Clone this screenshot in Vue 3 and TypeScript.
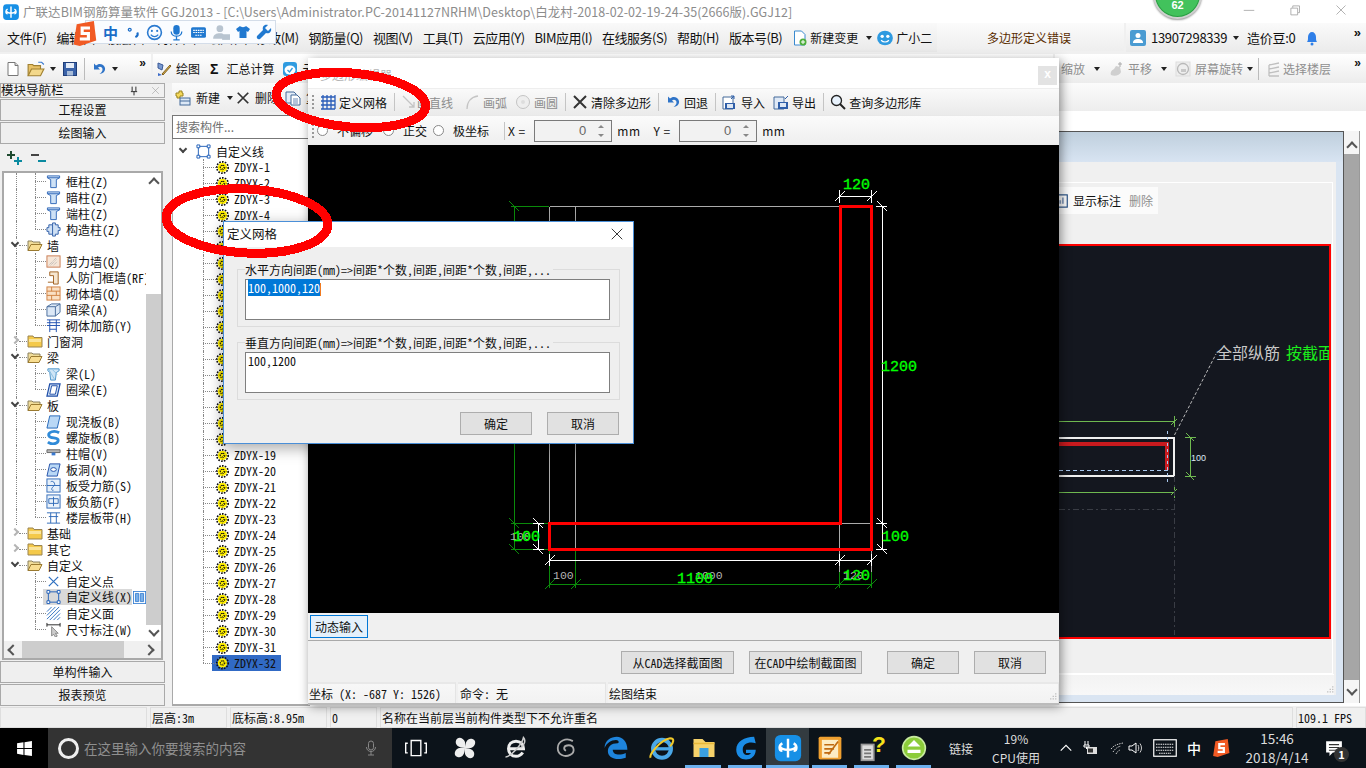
<template>
  <div class="desktop">
    <!-- main window -->
    <header class="titlebar">
      <Ico n="glodon" :s="18" class="app-icon" />
      <span class="title-text">广联达BIM钢筋算量软件 GGJ2013 - [C:\Users\Administrator.PC-20141127NRHM\Desktop\白龙村-2018-02-02-19-24-35(2666版).GGJ12]</span>
      <div class="win-ctrls">
        <Ico n="winMin" :s="12" />
        <Ico n="winMax" :s="12" />
        <Ico n="winClose" :s="12" />
      </div>
    </header>

    <nav class="menubar">
      <div class="menu-left">
        <span v-for="m in menus" :key="m" class="menu-item" :class="{ shifted: m === '修改(M)' }">{{ m }}</span>
        <span class="menu-item with-icon change"><Ico n="change" :s="16" />新建变更<i class="caret"></i></span>
        <span class="menu-item with-icon xiao"><Ico n="xiao" :s="18" />广小二</span>
      </div>
      <div class="menu-notice">多边形定义错误</div>
      <div class="menu-user">
        <Ico n="user" :s="16" />
        <span class="phone">13907298339</span><i class="caret"></i>
        <span class="beans">造价豆:0</span>
        <Ico n="bell" :s="16" class="bell" />
        <span class="more">»</span>
      </div>
    </nav>

    <div class="toolbar">
      <div class="tb-group first">
        <Ico n="doc" :s="16" /><Ico n="open" :s="18" /><i class="caret"></i><Ico n="save" :s="16" />
        <i class="tb-sep"></i>
        <Ico n="undo" :s="16" /><i class="caret"></i>
        <span class="more small">»</span>
      </div>
      <div class="tb-group second">
        <span class="tool"><Ico n="draw" :s="16" />绘图</span>
        <span class="tool"><b class="sigma">Σ</b>汇总计算</span>
        <span class="tool"><Ico n="cloud" :s="16" />云检查</span>
      </div>
      <div class="tb-group view-tools">
        <span class="tool off">缩放<i class="caret"></i></span>
        <span class="tool off"><Ico n="pan" :s="16" />平移<i class="caret"></i></span>
        <span class="tool off"><Ico n="rotate" :s="16" />屏幕旋转<i class="caret tight"></i></span>
        <i class="tb-sep"></i>
        <span class="tool off floors"><Ico n="floors" :s="16" />选择楼层</span>
        <span class="more small">»</span>
      </div>
    </div>

    <main class="workspace">
      <!-- module navigator -->
      <aside class="nav-panel">
        <div class="nav-head">
          <span>模块导航栏</span>
          <span class="nav-head-btns"><Ico n="pin" :s="10" /><Ico n="winClose" :s="9" /></span>
        </div>
        <button class="nav-btn">工程设置</button>
        <button class="nav-btn">绘图输入</button>
        <div class="nav-expand"><Ico n="plusplus" :s="16" /><Ico n="minusminus" :s="16" /></div>
        <div class="nav-tree-box">
          <div class="nav-tree-wrap">
            <div class="nav-tree">
              <div
                v-for="r in navRows"
                :key="r.t + r.k"
                class="nav-row"
                :class="[r.l ? 'lv1' : 'lv0', { trunk: r.trunk, branch: r.l && !r.end, branchend: r.end, sel: r.sel }]"
              >
                <template v-if="r.l">
                  <i class="hook"></i>
                  <Ico :n="r.i" :s="15" class="row-icon" />
                </template>
                <template v-else>
                  <i class="chev" :class="{ open: r.i === 'folderOpen' }"></i>
                  <i class="hook0"></i>
                  <Ico :n="r.i" :s="16" class="row-icon" />
                </template>
                <span class="row-label">{{ r.t }}{{ r.k }}</span>
                <Ico v-if="r.sel" n="bars" :s="13" class="row-tail" />
              </div>
            </div>
            <div class="vscroll">
              <i class="arrow up"></i>
              <div class="vspace"></div>
              <div class="vthumb"></div>
              <i class="arrow down"></i>
            </div>
          </div>
          <div class="hscroll">
            <i class="arrow left"></i>
            <div class="hthumb"></div>
            <i class="arrow right"></i>
          </div>
        </div>
        <button class="nav-btn">单构件输入</button>
        <button class="nav-btn">报表预览</button>
      </aside>

      <!-- component list -->
      <section class="comp-panel">
        <div class="comp-tools">
          <span class="tool"><Ico n="newcomp" :s="16" />新建<i class="caret"></i></span>
          <span class="tool"><Ico n="cross" :s="14" />删除</span>
          <span class="tool copy"><Ico n="copy" :s="16" />复制</span>
        </div>
        <div class="comp-search">搜索构件...</div>
        <div class="comp-tree">
          <div class="comp-root">
            <i class="chev open"></i>
            <Ico n="lineSq" :s="15" />
            <span>自定义线</span>
          </div>
          <div v-for="n in 32" :key="n" class="comp-row" :class="{ last: n === 32 }">
            <i class="hook"></i>
            <Ico n="gear" :s="13" />
            <span class="zdyx">ZDYX-{{ n }}</span>
          </div>
        </div>
      </section>

      <!-- window behind the editor -->
      <section class="back-area">
        <div class="back-strip"></div>
        <div class="back-body">
          <div class="back-frame">
            <div class="back-caption"></div>
            <div class="back-inner">
              <div class="back-outline">
                <div class="back-tools">
                  <span class="tool"><Ico n="showdim" :s="14" />显示标注</span>
                  <span class="tool off">删除</span>
                </div>
                <div class="back-canvas">
                  <svg class="back-svg" viewBox="310 247 1019 390" shape-rendering="crispEdges">
                    <path d="M1059 422.5H1175M1059 493.5H1175" stroke="#6fb950" fill="none" />
                    <path d="M1174 417v11M1171 426l6-6M1174 488v11M1171 496l6-6M1190.5 438v39M1185 438h11M1185 477h11M1186 434l8 8M1186 473l8 8" stroke="#6fb950" fill="none" />
                    <path d="M1059 438.5H1174V476.5H1059" stroke="#f0f0f0" stroke-width="2" fill="none" />
                    <path d="M1059 445H1167V471" stroke="#c81a1e" stroke-width="4" fill="none" />
                    <path d="M1059 471.5H1170" stroke="#a9c8ee" stroke-dasharray="4 3" fill="none" />
                    <path d="M1167 432V484" stroke="#a9c8ee" stroke-dasharray="3 3" fill="none" />
                    <path d="M1174.5 436L1216 355" stroke="#bbb" stroke-dasharray="3 2" fill="none" shape-rendering="auto" />
                    <path d="M1059 510H1174M1174.5 477V636" stroke="#3a3d45" stroke-dasharray="6 3 2 3" fill="none" />
                    <text x="1191" y="462" class="t-note">100</text>
                    <text x="1216" y="360" class="t-gray">全部纵筋</text>
                    <text x="1286" y="360" class="t-green">按截面</text>
                  </svg>
                </div>
              </div>
              <div class="back-status"><Ico n="grip" :s="10" class="grip" /></div>
            </div>
          </div>
          <div class="back-scroll">
            <i class="arrow up"></i>
            <div class="back-thumb"></div>
            <i class="arrow down"></i>
          </div>
        </div>
      </section>
    </main>

    <footer class="statusbar">
      <span class="cell c1"></span>
      <span class="cell c2">层高:3m</span>
      <span class="cell c3">底标高:8.95m</span>
      <span class="cell c4">0</span>
      <span class="cell c5">名称在当前层当前构件类型下不允许重名</span>
      <span class="cell c6">109.1 FPS</span>
    </footer>

    <div class="taskbar">
      <div class="start"><Ico n="windows" :s="17" /></div>
      <div class="search">
        <i class="cortana"></i>
        <span class="search-text">在这里输入你要搜索的内容</span>
        <Ico n="mic" :s="16" class="search-mic" />
      </div>
      <div
        v-for="a in taskApps"
        :key="a.n"
        class="task-slot"
        :class="{ running: a.on, current: a.cur }"
        :style="{ width: a.w + 'px' }"
      >
        <Ico :n="a.n" :s="a.s" />
      </div>
      <span class="task-link">链接</span>
      <div class="cpu"><span>19%</span><span>CPU使用</span></div>
      <div class="tray">
        <Ico n="trayUp" :s="14" />
        <Ico n="trayPower" :s="16" />
        <Ico n="trayWifi" :s="16" class="wifi" />
        <Ico n="traySound" :s="16" class="sound" />
        <Ico n="trayKbd" :s="24" />
        <span class="tray-ime">中</span>
        <Ico n="sogou" :s="18" class="tray-sogou" />
      </div>
      <div class="clock"><span>15:46</span><span>2018/4/14</span></div>
      <div class="notify">
        <Ico n="note" :s="18" />
        <span class="notify-num">1</span>
      </div>
    </div>

    <!-- polygon editor window -->
    <div class="editor">
      <div class="ed-title">
        <span class="ed-title-text">多边形编辑器</span>
        <span class="ed-close">x</span>
      </div>
      <div class="ed-toolbar row1">
        <i class="grip-v"></i>
        <template v-for="(it, i) in edTools" :key="i">
          <i v-if="it.sep" class="ed-sep"></i>
          <span v-else class="ed-tool" :class="{ off: it.off, tightgap: it.i === 'lineOff' }"><Ico :n="it.i!" :s="16" />{{ it.t }}</span>
        </template>
      </div>
      <div class="ed-toolbar row2">
        <i class="grip-v"></i>
        <label class="radio first"><i></i>不偏移</label>
        <label class="radio"><i></i>正交</label>
        <label class="radio"><i></i>极坐标</label>
        <i class="ed-sep"></i>
        <span class="coord-label">X =</span>
        <span class="spin"><span class="spin-val">0</span><span class="spin-btns"><i class="tri-up"></i><i class="tri-down"></i></span></span>
        <span class="unit">mm</span>
        <span class="coord-label y">Y =</span>
        <span class="spin"><span class="spin-val">0</span><span class="spin-btns"><i class="tri-up"></i><i class="tri-down"></i></span></span>
        <span class="unit">mm</span>
      </div>
      <div class="cad-area">
        <svg class="cad" viewBox="308 145 751 468" shape-rendering="crispEdges">
          <path :d="gridPath" stroke="#aaaaaa" fill="none" />
          <path :d="greenPath" stroke="#0a8a0a" fill="none" />
          <path :d="whitePath" stroke="#ffffff" fill="none" />
          <path d="M840 206.5H871.5V549.5H549.5V523.5H840Z" stroke="#ff0000" stroke-width="3" fill="none" />
          <text x="843" y="189" class="c-green">120</text>
          <text x="881" y="371" class="c-green">1200</text>
          <text x="882" y="541" class="c-green">100</text>
          <text x="510" y="540" class="c-gray">100</text>
          <text x="513" y="541" class="c-green">100</text>
          <text x="553" y="579" class="c-gray">100</text>
          <text x="695" y="579" class="c-gray">1000</text>
          <text x="843" y="579" class="c-gray">120</text>
          <text x="677" y="583" class="c-green">1100</text>
          <text x="843" y="580" class="c-green">120</text>
        </svg>
      </div>
      <div class="ed-dyn"><button class="dyn-btn">动态输入</button></div>
      <div class="ed-actions">
        <button class="win-btn a1">从CAD选择截面图</button>
        <button class="win-btn a2">在CAD中绘制截面图</button>
        <button class="win-btn a3">确定</button>
        <button class="win-btn a4">取消</button>
      </div>
      <div class="ed-status">
        <span class="ed-cell e1">坐标 (X: -687 Y: 1526)</span>
        <span class="ed-cell e2">命令: 无</span>
        <span class="ed-cell e3">绘图结束<Ico n="grip" :s="10" class="grip" /></span>
      </div>
    </div>

    <!-- define grid dialog -->
    <div class="dialog">
      <div class="dlg-title">
        <span>定义网格</span>
        <Ico n="dlgClose" :s="12" />
      </div>
      <div class="dlg-body">
        <fieldset class="dlg-group">
          <legend>水平方向间距(mm)=&gt;间距*个数,间距,间距*个数,间距,...</legend>
          <div class="dlg-input"><span class="picked">100,1000,120</span><i class="text-caret"></i></div>
        </fieldset>
        <fieldset class="dlg-group">
          <legend>垂直方向间距(mm)=&gt;间距*个数,间距,间距*个数,间距,...</legend>
          <div class="dlg-input">100,1200</div>
        </fieldset>
        <div class="dlg-btns">
          <button class="win-btn">确定</button>
          <button class="win-btn">取消</button>
        </div>
      </div>
    </div>

    <!-- hand drawn marks on the screenshot -->
    <svg class="marks" viewBox="0 0 1366 768" shape-rendering="crispEdges">
      <ellipse cx="351" cy="100" rx="75" ry="27" transform="rotate(5 351 100)" />
      <ellipse cx="247" cy="221" rx="81" ry="32" transform="rotate(3 247 221)" />
    </svg>

    <!-- sogou input bar -->
    <div class="ime">
      <Ico n="sogou" :s="25" class="ime-logo" />
      <b class="ime-zh">中</b>
      <Ico n="imePunct" :s="15" />
      <Ico n="imeSmile" :s="17" />
      <Ico n="imeMic" :s="17" />
      <Ico n="imeKbd" :s="17" />
      <Ico n="imeUser" :s="18" />
      <Ico n="imeShirt" :s="16" />
      <Ico n="imeWrench" :s="16" />
    </div>

    <div class="score-badge"><span>62</span></div>
  </div>
</template>

<script setup lang="ts">
import { h } from 'vue'

// icons are 16x16 unless the path says otherwise
const icons: Record<string, string> = {
  glodon: '<rect x="1" y="1" width="14" height="14" rx="3" fill="#1790e6"/><path d="M8 3v10M4 7.5c1 2 7 2 8 0M5 5.5c-2 1-2 4 0 4M11 5.5c2 1 2 4 0 4" stroke="#fff" stroke-width="1.3" fill="none"/>',
  winMin: '<path d="M1 8.5h14" stroke="#999"/>',
  winMax: '<path d="M2.5 5.5h9v9h-9zM5 5V2.5h9v9h-2" stroke="#999" fill="none"/>',
  winClose: '<path d="M2 2l12 12M14 2L2 14" stroke="#999" fill="none"/>',
  dlgClose: '<path d="M1 1l14 14M15 1L1 15" stroke="#222" stroke-width="1.2" fill="none"/>',
  change: '<path d="M2.5 1h7l3.5 3.5V15H2.5z" fill="#fff" stroke="#3a8ad0"/><circle cx="11" cy="12" r="3.5" fill="#4fae3c"/><path d="M9 12h4M11 10v4" stroke="#fff"/>',
  xiao: '<ellipse cx="8" cy="8" rx="7" ry="6.5" fill="#2e9ae0"/><circle cx="5.5" cy="6.5" r="1.5" fill="#fff"/><circle cx="10.5" cy="6.5" r="1.5" fill="#fff"/><path d="M4.5 10c2 2 5 2 7 0" stroke="#fff" fill="none"/>',
  user: '<rect width="16" height="16" rx="2" fill="#4a9bd2"/><circle cx="8" cy="5.5" r="2.5" fill="#fff"/><path d="M3 13c0-3 2-4 5-4s5 1 5 4z" fill="#fff"/>',
  bell: '<path d="M3 12c1-1 1-3 1-5 0-3 2-5 4-5s4 2 4 5c0 2 0 4 1 5z" fill="#2f7fe8"/><circle cx="8" cy="14" r="1.5" fill="#2f7fe8"/>',
  doc: '<path d="M3 1.5h7l3 3v10H3z" fill="#fff" stroke="#777"/><path d="M10 1.5v3h3" fill="#ddd" stroke="#777"/>',
  open: '<path d="M1 14V4h4l1 1h6v3" fill="#e8c268" stroke="#a08030"/><path d="M1 14l3-6h11l-3 6z" fill="#f3d88a" stroke="#a08030"/><path d="M10 2l3 0 2 2" stroke="#3a7ad0" fill="none"/>',
  save: '<rect x="1.5" y="1.5" width="13" height="13" fill="#3a62a8" stroke="#1f3d78"/><rect x="4" y="2" width="8" height="5" fill="#e4ebf6"/><rect x="5" y="10" width="6" height="4.5" fill="#a8bcd8"/>',
  undo: '<path d="M3 2.5v6h6l-2-2c2-1.5 4.5-.5 4.5 2 0 1.5-1 3-3 4.5 4-.5 6-3 5.5-6C13 3 8 1.5 5 4.5z" fill="#2f74c8"/>',
  draw: '<path d="M2 2l5 2-1 5-4-2z" fill="#7a9ad0" stroke="#3a5a98"/><path d="M6 13l8-9 1 1-8 9z" fill="#d8b04a" stroke="#806020"/><path d="M2 12l4 2-4 1z" fill="#3a6ac8"/>',
  cloud: '<rect x="1" y="1" width="14" height="14" rx="3" fill="#2f9be0"/><ellipse cx="8" cy="9" rx="5.5" ry="4.5" fill="#fff"/><path d="M5.5 9l2 2 3-4" stroke="#2f9be0" stroke-width="1.3" fill="none"/>',
  pan: '<path d="M3 14c-1-3 1-5 3-6l2-3 4 1 1 5c-1 3-6 5-10 3z" fill="#cfcfcf"/><path d="M12 1v5M10 3h4" stroke="#aaa"/>',
  rotate: '<rect x="1" y="1" width="14" height="14" fill="#eee" stroke="#ddd"/><circle cx="8" cy="8" r="5.5" stroke="#b8b8b8" stroke-width="1.3" fill="none"/><path d="M6 8h5v3H6z" fill="#c8c8c8"/>',
  floors: '<path d="M4 4l10-2M4 8l10-2M4 12l10-2M4 15h10M4 4v11" stroke="#c0c0c0" stroke-width="1.3" fill="none"/>',
  pin: '<path d="M5 1v7M11 1v7M3 9h10M8 9v6" stroke="#222" stroke-width="1.5" fill="none"/>',
  plusplus: '<path d="M4 1v8M0 5h8" stroke="#1f4a30" stroke-width="2"/><path d="M11 7v8M7 11h8" stroke="#0a8aa0" stroke-width="2"/>',
  minusminus: '<path d="M0 5h8" stroke="#444" stroke-width="2"/><path d="M7 11h8" stroke="#0a8aa0" stroke-width="2"/>',
  folderOpen: '<path d="M1 13.5V4h4l1 1h7v2.5" fill="#f0dc98" stroke="#8a8060"/><path d="M1 13.5l3-6h11l-3 6z" fill="#f8dd90" stroke="#9a7a30"/>',
  folder: '<path d="M1 14V3h5l1 1.5h8V14z" fill="#f4c94a" stroke="#9a8450"/><path d="M2 6h12v3H2z" fill="#fae49a"/>',
  col: '<path d="M1.5 2h13v2L11 6v8.5H5V6L1.5 4z" fill="#cfe2f6" stroke="#2f66b8"/><path d="M1.5 4h13" stroke="#2f66b8"/>',
  gearCol: '<path d="M3 3h4V1h3v2h3v3h2v3h-2v4h-3v2H7v-2H3v-3H1V6h2z" fill="#cfe0f4" stroke="#2f5ea8"/><path d="M7 3v10" stroke="#2f5ea8"/>',
  wall: '<rect x="1" y="2" width="14" height="12" fill="#f6e6d8" stroke="#c87a50"/><path d="M3 12l8-8M5 12l6-6M8 12l4-4" stroke="#aaa" stroke-dasharray="1 1"/>',
  door: '<path d="M4 2h9v13H8V6H4z" fill="#f6e6d0" stroke="#a06020"/><path d="M2 13h6" stroke="#a06020"/>',
  brick: '<rect x="1" y="1" width="14" height="14" fill="#fae0c4" stroke="#d08040"/><path d="M1 5.5h14M1 10h14M6 1v4.5M11 5.5V10M6 10v5" stroke="#d08040"/>',
  beam: '<path d="M1 5l5-3h9v9l-5 4H1z" fill="#dce8f6" stroke="#456a9a"/><path d="M1 5h9v10M10 5l5-3" stroke="#456a9a" fill="none"/>',
  wallbar: '<path d="M1 2h14M1 5h14M4 2v13M11 2v13M1 8h14M4 12h7" stroke="#1f50b0" fill="none"/>',
  beamL: '<path d="M2 3h12v2l-3 2-1 8H5L4 7 2 5z" fill="#cfe5f6" stroke="#4a92c8"/><path d="M3 4l6 10M7 4l5 5" stroke="#88bde0"/>',
  ring: '<path d="M4 2h11l-3 13H1z" fill="#d4e4f6" stroke="#1f4ea8" stroke-width="1.3"/><path d="M6 4h6l-2 9H4z" fill="#fff" stroke="#1f4ea8"/>',
  slab: '<path d="M4 2h11l-3 13H1z" fill="#b9d8f6" stroke="#1f64b8"/>',
  spiral: '<path d="M14 3c-5-3-12-1-11 3s10 1 10 5-7 5-11 2" stroke="#2f8ad8" stroke-width="3" fill="none"/>',
  cap: '<path d="M1 4h14v3H1z" fill="#b8b8b8" stroke="#666"/><path d="M6 7h4v3H6z" fill="#3a7ad0"/>',
  hole: '<path d="M4 2h11l-3 13H1z" fill="#b9d8f6" stroke="#1f4ea8"/><ellipse cx="8" cy="8" rx="3" ry="2" fill="#fff" stroke="#1f4ea8"/>',
  slabbar: '<rect x="1" y="1" width="14" height="14" fill="#e6f0fa" stroke="#2f6ab8"/><path d="M1 8h14M5 4c3-2 6 3 3 5s-2 5 0 4" stroke="#2f6ab8" fill="none"/>',
  negbar: '<rect x="1" y="1" width="14" height="14" fill="#eaf2fa" stroke="#2f6ab8"/><path d="M3 5h10v5H3zM8 3v10" stroke="#2f6ab8" fill="none"/>',
  band: '<path d="M1 3h14M1 14h14M5 3v11M11 3v11M3 7h10" stroke="#2f6ab8" fill="none"/>',
  point: '<path d="M3 3l10 10M13 3L3 13" stroke="#2f70c0" stroke-width="1.3"/>',
  lineSq: '<path d="M2.5 2.5h11v11h-11z" fill="none" stroke="#1f5eb8"/><path d="M1 1h3v3H1zM12 1h3v3h-3zM1 12h3v3H1zM12 12h3v3h-3z" fill="#fff" stroke="#1f5eb8"/>',
  hatch: '<path d="M1 6l5-5M1 10l9-9M1 14L14 1M4 15L15 4M8 15l7-7M12 15l3-3" stroke="#2f70c0"/>',
  dimmark: '<path d="M1 1v4M15 1v4M1 3h14" stroke="#222"/><path d="M6 5l7 7-3 0 2 3-2 1-2-3-2 2z" fill="#ccc" stroke="#888"/>',
  bars: '<rect x=".5" y=".5" width="15" height="15" fill="#fff" stroke="#2f7ad0"/><path d="M3 3h4v10H3zM9 3h4v10H9z" fill="#7ab0e8" stroke="#2f7ad0"/>',
  newcomp: '<path d="M1 3h3V1h3v2h1v3H5v2H2V6H1z" fill="#f4d85a" stroke="#9a8420"/><rect x="5" y="8" width="10" height="7" fill="#dce8f6" stroke="#456a9a"/><path d="M5 11h10" stroke="#456a9a"/>',
  cross: '<path d="M2 2l12 12M14 2L2 14" stroke="#333" stroke-width="2"/>',
  copy: '<path d="M1 2h8l2 2v9H1z" fill="#e4edf8" stroke="#456a9a"/><path d="M6 5h6l3 3v7H6z" fill="#fff" stroke="#456a9a"/><path d="M8 9h5M8 11h5M8 13h5" stroke="#6a8ab8"/>',
  gear: '<circle cx="8" cy="8" r="7" fill="none" stroke="#111" stroke-width="2" stroke-dasharray="2 1.5"/><circle cx="8" cy="8" r="5.8" fill="#ffef00"/><circle cx="8" cy="8" r="2.8" fill="none" stroke="#111" stroke-width="1.3" stroke-dasharray="1.5 1"/><path d="M8 1v14M1 8h14" stroke="#111" stroke-dasharray="1 3"/>',
  showdim: '<rect x="1" y="1" width="13" height="14" fill="#fff" stroke="#1f4a80" stroke-width="1.3"/><path d="M6 11V7M9 11V4" stroke="#8aa0c0" stroke-width="2"/>',
  grip: '<path d="M13 2h2v2h-2zM9 6h2v2H9zM13 6h2v2h-2zM5 10h2v2H5zM9 10h2v2H9zM13 10h2v2h-2z" fill="#bbb"/>',
  grid: '<path d="M3 1v14M7 1v14M11 1v14M15 1v14M1 3h14M1 7h14M1 11h14M1 15h14" stroke="#2a5cb8" stroke-width="1.3"/>',
  lineOff: '<path d="M2 2l11 11M13 8v5H8" stroke="#c4c4c4" stroke-width="1.3" fill="none"/>',
  arcOff: '<path d="M3 15C3 8 7 3 14 2" stroke="#c4c4c4" stroke-width="1.3" fill="none"/>',
  circleOff: '<circle cx="8" cy="8" r="6.5" fill="#eee" stroke="#c4c4c4"/><circle cx="8" cy="8" r="2" fill="#ddd"/>',
  importIc: '<path d="M1 3h10v12H1z" fill="#fff" stroke="#456a9a"/><rect x="3" y="9" width="10" height="6" fill="#2f5ea8"/><rect x="5" y="10" width="6" height="4" fill="#dde7f4"/><path d="M9 5l3-3M12 2v3M12 2H9" stroke="#2f5ea8"/>',
  exportIc: '<path d="M1 3h10v12H1z" fill="#dfe9f6" stroke="#456a9a"/><rect x="5" y="8" width="10" height="7" fill="#2f5ea8"/><rect x="7" y="9" width="6" height="4" fill="#dde7f4"/><path d="M12 5l3-3" stroke="#2f5ea8"/>',
  lens: '<circle cx="6.5" cy="6.5" r="5" fill="#e8f2fc" stroke="#222" stroke-width="1.3"/><path d="M10 10l5 5" stroke="#222" stroke-width="2"/>',
  windows: '<path d="M1 3l6-1v5.5H1zM8 2l7-1v6.5H8zM1 8.5h6V14l-6-1zM8 8.5h7V15l-7-1z" fill="#fff"/>',
  mic: '<rect x="5.5" y="1" width="5" height="9" rx="2.5" fill="none" stroke="#888"/><path d="M3.5 7c0 6 9 6 9 0M8 12v3M5 15h6" stroke="#888" fill="none"/>',
  taskview: '<path d="M4.5 2.5h7v11h-7zM2 4.5H.5v7H2M14 4.5h1.5v7H14" stroke="#fff" fill="none"/>',
  fan: '<path d="M8 8C4 8 1 6 2 3s5-2 6 1zM8 8c0-4 2-7 5-6s2 5-1 6zM8 8c4 0 7 2 6 5s-5 2-6-1zM8 8c0 4-2 7-5 6s-2-5 1-6z" fill="#eee"/>',
  eBlack: '<path d="M3 8.5h10c0-3-2-5-5-5s-5 2-5 5 2 5 5 5c2 0 3.5-1 4.5-2.5" stroke="#eee" stroke-width="2" fill="none"/><path d="M1 14C4 14 12 6 13 1c2 2 0 6-2 7" stroke="#ccc" fill="none"/>',
  spiralG: '<path d="M13 3C8 0 2 3 2 8s5 7 9 5 3-7-1-7-4 3-2 4" stroke="#aaa" stroke-width="1.3" fill="none"/>',
  edge: '<path d="M1 8c0-5 4-7 7.5-7S15 4 15 9H6c0 3 4 4 8 2v3c-6 2-11 0-11-4 0-3 2-5 6-5 1 0 1-2-1-2C5 3 2 5 1 8z" fill="#1e84dc"/>',
  ie: '<circle cx="8" cy="8.5" r="5.5" fill="none" stroke="#4aa8e8" stroke-width="2.5"/><path d="M3 8.5h10" stroke="#4aa8e8" stroke-width="2"/><path d="M1 14C0 12 7 3 13 2c3 0 2 3 0 5" stroke="#f0c82a" stroke-width="1.3" fill="none"/>',
  explorer: '<path d="M1 2h6l2 2h6v10H1z" fill="#f6d26a"/><path d="M5 8h6v6H5z" fill="#3aa0e0"/><path d="M1 5h14" stroke="#e8b83a"/>',
  gBlue: '<path d="M13 1C7 1 2 4 2 9c0 4 3 6 6 6s6-2 6-6H8v2h3c-1 2-5 2-5-2s4-5 8-4z" fill="#1a8ce6"/>',
  note: '<path d="M1 2h14v10H7l-3 3v-3H1z" fill="#fff"/><path d="M3.5 5h9M3.5 7.5h9M3.5 10h9" stroke="#333"/>',
  notepad: '<rect x="1" y="1" width="14" height="14" rx="1" fill="#f0a030"/><rect x="3" y="3" width="10" height="11" fill="#fcecc4"/><path d="M4.5 6h6M4.5 8.5h6M4.5 11h4M7 12l6-8" stroke="#c06a10"/>',
  helpdoc: '<rect x="2" y="6" width="7" height="9" fill="#ddd" stroke="#999"/><path d="M3.5 9h4M3.5 11h4M3.5 13h4" stroke="#777"/><text x="8" y="10" font-size="13" font-weight="bold" fill="#f6e11a" font-family="Liberation Sans">?</text>',
  greenApp: '<circle cx="8" cy="8" r="7" fill="#8ccc3a" stroke="#c8eaa0"/><path d="M4 7h8L8 3zM4 9h8v2H4z" fill="#fff"/>',
  trayUp: '<path d="M2 11l6-6 6 6" stroke="#fff" stroke-width="1.3" fill="none"/>',
  trayPower: '<path d="M3 1v4M6 1v4M2 5h5v2H2zM4.5 7v2" stroke="#fff" fill="none"/><rect x="5" y="7" width="10" height="7" fill="#ddd"/><rect x="6" y="8.5" width="5" height="4" fill="#333"/>',
  trayWifi: '<path d="M2 9c3-3 3-4 12-6M4 12c2-3 4-5 8-6M7 14c1-2 2-3 4-4" stroke="#ccc" fill="none" stroke-dasharray="1.5 1"/>',
  traySound: '<path d="M1 6h3l4-3v10l-4-3H1z" fill="none" stroke="#fff"/><path d="M10 5c1 2 1 4 0 6M12 3.5c2 3 2 6 0 9" stroke="#ccc" fill="none"/>',
  trayKbd: '<rect x=".5" y="2.5" width="15" height="11" fill="none" stroke="#fff" stroke-width=".8"/><path d="M2 5.5h12M2 7.5h12M2 9.5h12M4 11.5h8" stroke="#eee" stroke-width=".8" stroke-dasharray="1 .5"/>',
  sogou: '<path d="M3 2l11-2 1.5 12.5L5 16 1 15z" fill="#f15a24"/><path d="M11.5 4.5h-5V8h4v3.5H5" stroke="#fff" stroke-width="2" fill="none"/>',
  imePunct: '<circle cx="4" cy="5" r="1.5" fill="none" stroke="#1a6cc8" stroke-width="1.3"/><path d="M12 8c1 2 0 4-2 5" stroke="#1a6cc8" stroke-width="2.2" fill="none"/>',
  imeSmile: '<circle cx="8" cy="8" r="6.5" fill="none" stroke="#2a7ad0" stroke-width="1.5"/><circle cx="5.5" cy="6.5" r="1" fill="#2a7ad0"/><circle cx="10.5" cy="6.5" r="1" fill="#2a7ad0"/><path d="M4.5 10c2 2.5 5 2.5 7 0" stroke="#2a7ad0" stroke-width="1.2" fill="none"/>',
  imeMic: '<rect x="5" y="1" width="6" height="9" rx="3" fill="#1f78d0"/><path d="M3 7c0 6 10 6 10 0M8 12v3M5 15h6" stroke="#1f78d0" stroke-width="1.2" fill="none"/>',
  imeKbd: '<rect x="1" y="3" width="14" height="10" rx="1.5" fill="#1f78d0"/><path d="M3 6h10M3 8h10M5 10.5h6" stroke="#fff" stroke-dasharray="1.5 .7"/>',
  imeUser: '<circle cx="7" cy="5" r="3" fill="#b8c4d0"/><path d="M1 14c0-4 3-5 6-5 2 0 3 .5 3 1v4z" fill="#b8c4d0"/><rect x="9" y="10" width="7" height="5" fill="#b8c4d0"/>',
  imeShirt: '<path d="M5 2L1 5l2 3 1.5-1v7h7V7L13 8l2-3-4-3c-1 1.5-5 1.5-6 0z" fill="#1f78d0"/>',
  imeWrench: '<path d="M15 4l-3 3-3-3 3-3C8 0 6 3 7 6l-6 6c-1 2 1 4 3 3l6-6c3 1 6-1 5-5z" fill="#1f78d0"/>'
}

// 16-unit svg icon, the paths come from the table above
const Ico = (props: { n: string; s?: number }) =>
  h('svg', {
    viewBox: '0 0 16 16',
    width: props.s ?? 16,
    height: props.s ?? 16,
    innerHTML: icons[props.n] ?? ''
  })
Ico.props = ['n', 's']

const menus = ['文件(F)', '编辑(E)', '楼层(L)', '构件(N)', '绘图(D)', '修改(M)', '钢筋量(Q)', '视图(V)', '工具(T)', '云应用(Y)', 'BIM应用(I)', '在线服务(S)', '帮助(H)', '版本号(B)']

interface NavRow { t: string; k: string; i: string; l: number; trunk?: boolean; end?: boolean; sel?: boolean }

const navRows: NavRow[] = [
  { t: '框柱', k: '(Z)', i: 'col', l: 1, trunk: true },
  { t: '暗柱', k: '(Z)', i: 'col', l: 1, trunk: true },
  { t: '端柱', k: '(Z)', i: 'col', l: 1, trunk: true },
  { t: '构造柱', k: '(Z)', i: 'gearCol', l: 1, trunk: true, end: true },
  { t: '墙', k: '', i: 'folderOpen', l: 0, trunk: true },
  { t: '剪力墙', k: '(Q)', i: 'wall', l: 1, trunk: true },
  { t: '人防门框墙', k: '(RF)', i: 'door', l: 1, trunk: true },
  { t: '砌体墙', k: '(Q)', i: 'brick', l: 1, trunk: true },
  { t: '暗梁', k: '(A)', i: 'beam', l: 1, trunk: true },
  { t: '砌体加筋', k: '(Y)', i: 'wallbar', l: 1, trunk: true, end: true },
  { t: '门窗洞', k: '', i: 'folder', l: 0, trunk: true },
  { t: '梁', k: '', i: 'folderOpen', l: 0, trunk: true },
  { t: '梁', k: '(L)', i: 'beamL', l: 1, trunk: true },
  { t: '圈梁', k: '(E)', i: 'ring', l: 1, trunk: true, end: true },
  { t: '板', k: '', i: 'folderOpen', l: 0, trunk: true },
  { t: '现浇板', k: '(B)', i: 'slab', l: 1, trunk: true },
  { t: '螺旋板', k: '(B)', i: 'spiral', l: 1, trunk: true },
  { t: '柱帽', k: '(V)', i: 'cap', l: 1, trunk: true },
  { t: '板洞', k: '(N)', i: 'hole', l: 1, trunk: true },
  { t: '板受力筋', k: '(S)', i: 'slabbar', l: 1, trunk: true },
  { t: '板负筋', k: '(F)', i: 'negbar', l: 1, trunk: true },
  { t: '楼层板带', k: '(H)', i: 'band', l: 1, trunk: true, end: true },
  { t: '基础', k: '', i: 'folder', l: 0 },
  { t: '其它', k: '', i: 'folder', l: 0 },
  { t: '自定义', k: '', i: 'folderOpen', l: 0 },
  { t: '自定义点', k: '', i: 'point', l: 1 },
  { t: '自定义线', k: '(X)', i: 'lineSq', l: 1, sel: true },
  { t: '自定义面', k: '', i: 'hatch', l: 1 },
  { t: '尺寸标注', k: '(W)', i: 'dimmark', l: 1, end: true }
]

interface EdTool { t?: string; i?: string; off?: boolean; sep?: boolean }

const edTools: EdTool[] = [
  { t: '定义网格', i: 'grid' },
  { sep: true },
  { t: '画直线', i: 'lineOff', off: true },
  { t: '画弧', i: 'arcOff', off: true },
  { t: '画圆', i: 'circleOff', off: true },
  { sep: true },
  { t: '清除多边形', i: 'cross' },
  { sep: true },
  { t: '回退', i: 'undo' },
  { sep: true },
  { t: '导入', i: 'importIc' },
  { t: '导出', i: 'exportIc' },
  { sep: true },
  { t: '查询多边形库', i: 'lens' }
]

const taskApps = [
  { n: 'taskview', w: 48, s: 22 },
  { n: 'fan', w: 50, s: 24 },
  { n: 'eBlack', w: 51, s: 24 },
  { n: 'spiralG', w: 50, s: 22 },
  { n: 'edge', w: 50, s: 26 },
  { n: 'ie', w: 41, s: 26 },
  { n: 'explorer', w: 43, s: 24, on: true },
  { n: 'gBlue', w: 41, s: 26, on: true },
  { n: 'glodon', w: 43, s: 30, on: true, cur: true },
  { n: 'notepad', w: 42, s: 26, on: true },
  { n: 'helpdoc', w: 42, s: 28, on: true },
  { n: 'greenApp', w: 42, s: 26, on: true }
]

// cad lines, page coordinates: [x1, y1, x2, y2]
type Seg = [number, number, number, number]
const toPath = (segs: Seg[]) => segs.map(s => `M${s[0]} ${s[1]}L${s[2]} ${s[3]}`).join('')
const slash = (x: number, y: number): Seg[] => [[x - 5, y + 5, x + 5, y - 5]]
const backslash = (x: number, y: number): Seg[] => [[x - 5, y - 5, x + 5, y + 5]]

const gridPath = toPath([
  [549.5, 206.5, 840, 206.5],
  [549.5, 206.5, 549.5, 549],
  [575.5, 206.5, 575.5, 549],
  [839.5, 523, 839.5, 572],
  [871.5, 523, 871.5, 572],
  [840, 523.5, 872, 523.5]
])

const greenPath = toPath([
  [514.5, 206, 514.5, 549],
  [511, 206.5, 549, 206.5],
  [511, 523.5, 549, 523.5],
  [511, 549.5, 549, 549.5],
  [549, 584.5, 872, 584.5],
  [549.5, 550, 549.5, 588],
  [575.5, 550, 575.5, 588],
  [839.5, 572, 839.5, 588],
  [871.5, 572, 871.5, 588],
  ...slash(549.5, 584.5),
  ...slash(575.5, 584.5),
  ...slash(839.5, 584.5),
  ...slash(871.5, 584.5),
  ...backslash(514.5, 206.5),
  ...backslash(514.5, 523.5),
  ...backslash(514.5, 549.5)
])

const whitePath = toPath([
  [839.5, 196.5, 871.5, 196.5],
  [839.5, 190, 839.5, 203],
  [871.5, 190, 871.5, 203],
  ...slash(839.5, 196.5),
  ...slash(871.5, 196.5),
  [882.5, 206, 882.5, 549],
  [876, 206.5, 887, 206.5],
  [876, 523.5, 887, 523.5],
  [876, 549.5, 887, 549.5],
  ...backslash(882.5, 206.5),
  ...backslash(882.5, 523.5),
  ...backslash(882.5, 549.5),
  [549, 560.5, 872, 560.5],
  [549.5, 554, 549.5, 566],
  [839.5, 554, 839.5, 566],
  [871.5, 554, 871.5, 566],
  ...slash(549.5, 560.5),
  ...slash(839.5, 560.5),
  ...slash(871.5, 560.5),
  [538.5, 523, 538.5, 549],
  [533, 523.5, 544, 523.5],
  [533, 549.5, 544, 549.5],
  ...backslash(538.5, 523.5),
  ...backslash(538.5, 549.5)
])
</script>

<style>
html,
body {
  margin: 0;
  background: #000;
}
</style>

<style scoped>
* {
  box-sizing: border-box;
}

i {
  font-style: normal;
}

svg {
  flex: none;
}

.desktop {
  --sim: "Noto Sans Mono CJK SC", "Liberation Mono", "Noto Sans CJK SC", monospace;
  --ui: "Noto Sans CJK SC", "Open Sans", sans-serif;
  position: relative;
  width: 1366px;
  height: 768px;
  overflow: hidden;
  display: flex;
  flex-direction: column;
  background: #f0f0f0;
  font-family: var(--ui);
  font-size: 12px;
  color: #111;
}

button {
  font: inherit;
  color: inherit;
  cursor: default;
}

/* title bar */
.titlebar {
  height: 23px;
  flex: none;
  display: flex;
  align-items: center;
  background: #fff;
  padding-left: 2px;
}

.app-icon {
  margin-right: 3px;
}

.title-text {
  color: #8c8c8c;
  font-size: 12.5px;
  white-space: nowrap;
  letter-spacing: 0.06px;
}

.win-ctrls {
  margin-left: auto;
  display: flex;
  gap: 34px;
  padding-right: 19px;
  padding-bottom: 3px;
}

/* menu */
.menubar {
  height: 31px;
  flex: none;
  display: flex;
  align-items: flex-start;
  background: #f0f0f0;
}

.menu-left {
  width: 937px;
  height: 29px;
  flex: none;
  display: flex;
  align-items: center;
  gap: 10px;
  padding-left: 7px;
  background: linear-gradient(#f9f9f9, #e9e9e9);
  font-size: 13px;
  letter-spacing: -0.5px;
  white-space: nowrap;
}

.menu-item.shifted {
  margin-left: -3px;
}

.with-icon {
  display: flex;
  align-items: center;
  gap: 2px;
  font-size: 12px;
  letter-spacing: 0;
}

.change .caret {
  margin: 0 0 0 6px;
}

.xiao {
  margin-left: -6px;
}

.caret {
  display: inline-block;
  width: 0;
  height: 0;
  margin: 0 0 0 6px;
  border: 3.5px solid transparent;
  border-top: 4px solid #222;
  border-bottom: 0;
}

.caret.tight {
  margin: 0 0 0 4px;
}

.menu-notice {
  width: 187px;
  height: 28px;
  flex: none;
  padding-left: 50px;
  line-height: 29px;
  background: linear-gradient(#fbfbfb, #eee);
  color: #5a2d00;
  font-size: 12px;
}

.menu-user {
  flex: 1;
  height: 29px;
  margin-left: 2px;
  display: flex;
  align-items: center;
  padding-left: 4px;
  background: linear-gradient(#fafafa, #ebebeb);
  font-size: 13px;
  white-space: nowrap;
}

.phone {
  margin-left: 5px;
  letter-spacing: -0.3px;
}

.beans {
  margin-left: 8px;
  letter-spacing: -0.3px;
}

.bell {
  margin-left: 9px;
}

.more {
  margin-left: auto;
  margin-right: 5px;
  font-weight: 700;
  font-family: "Liberation Sans", sans-serif;
  line-height: 1;
  align-self: flex-start;
  margin-top: 3px;
}

/* main toolbar */
.toolbar {
  height: 29px;
  flex: none;
  display: flex;
  gap: 2px;
  background: #f0f0f0;
}

.tb-group {
  display: flex;
  align-items: center;
  height: 29px;
  background: linear-gradient(#fff, #ececec);
  white-space: nowrap;
}

.tb-group.first {
  width: 151px;
  padding-left: 5px;
  gap: 6px;
}

.tb-group.first .caret {
  margin: 0;
}

.tb-group.first svg + .caret {
  margin-left: -1px;
}

.tb-sep {
  width: 1px;
  height: 22px;
  background: #bbb;
}

.tb-group.second {
  width: 900px;
  padding-left: 3px;
  gap: 8px;
}

.tb-group.view-tools {
  flex: 1;
  padding-left: 6px;
  gap: 8px;
}

.tb-group.view-tools .tb-sep {
  margin: 0 -2px 0 -3px;
}

.tool {
  display: inline-flex;
  align-items: center;
  gap: 4px;
  font-size: 12px;
}

.tool.floors {
  gap: 2px;
}

.tool.off {
  color: #8f8f8f;
}

.tool .caret {
  margin: 0 0 0 5px;
}

.tool .caret.tight {
  margin: 0;
}

.sigma {
  font-family: "Liberation Sans", sans-serif;
  font-size: 14px;
  margin: 0 4px 0 2px;
}

/* workspace */
.workspace {
  flex: 1;
  min-height: 0;
  display: flex;
}

.nav-panel {
  width: 165px;
  flex: none;
  display: flex;
  flex-direction: column;
  gap: 1px;
  font-family: var(--sim);
}

.nav-head {
  height: 15px;
  flex: none;
  display: flex;
  justify-content: space-between;
  align-items: center;
  border: 1px solid #aaa;
  padding-right: 4px;
  font-size: 12.5px;
  line-height: 1;
}

.nav-head-btns {
  display: flex;
  gap: 12px;
  align-items: center;
}

.nav-btn {
  height: 22px;
  flex: none;
  background: #efefef;
  border: 1px solid #a9a9a9;
  padding: 0;
  font-size: 12px;
  line-height: 1;
}

.nav-expand {
  height: 25px;
  flex: none;
  display: flex;
  align-items: center;
  gap: 8px;
  padding-left: 7px;
  background: #f0f0f0;
}

.nav-tree-box {
  flex: 1;
  min-height: 0;
  margin: 0 2px;
  border: 2px solid #a9a9a9;
  background: #f0f0f0;
  display: flex;
  flex-direction: column;
}

.nav-tree-wrap {
  flex: 1;
  min-height: 0;
  display: flex;
}

.nav-tree {
  width: 142px;
  flex: none;
  background: #fff;
  overflow: hidden;
  font-size: 12px;
}

.nav-row {
  position: relative;
  height: 16px;
  display: flex;
  align-items: center;
  white-space: nowrap;
}

.nav-row.lv0 {
  padding-left: 23px;
}

.nav-row.lv1 {
  padding-left: 42px;
}

.nav-row .row-label {
  margin-left: 5px;
}

.nav-row.lv0 .row-label {
  margin-left: 4px;
}

.nav-row.trunk::before {
  content: "";
  position: absolute;
  left: 12px;
  top: 0;
  bottom: 0;
  border-left: 1px dotted #888;
}

.nav-row.branch::after,
.nav-row.branchend::after {
  content: "";
  position: absolute;
  left: 31px;
  top: 0;
  bottom: 0;
  border-left: 1px dotted #888;
}

.nav-row.branchend::after {
  bottom: 8px;
}

.hook {
  position: absolute;
  left: 31px;
  top: 8px;
  width: 11px;
  border-top: 1px dotted #888;
}

.hook0 {
  position: absolute;
  left: 15px;
  top: 8px;
  width: 8px;
  border-top: 1px dotted #888;
}

.row-icon {
  position: relative;
  z-index: 1;
}

.sel .row-label {
  background: #d9d9d9;
  height: 16px;
  line-height: 16px;
  margin-left: 0;
  padding-left: 5px;
}

.sel .row-icon {
  background: #d9d9d9;
  box-shadow: -3px 0 0 #d9d9d9;
  height: 16px;
}

.row-tail {
  margin-left: 1px;
}

.chev {
  position: absolute;
  left: 8px;
  top: 4px;
  width: 6px;
  height: 6px;
  border-right: 2px solid #b4b4b4;
  border-bottom: 2px solid #b4b4b4;
  transform: rotate(-45deg);
  background: #fff;
  z-index: 1;
}

.chev.open {
  top: 3px;
  border-color: #444;
  transform: rotate(45deg);
}

.vscroll {
  width: 15px;
  flex: none;
  display: flex;
  flex-direction: column;
  background: #fff;
}

.vspace {
  height: 105px;
  flex: none;
  background: #fff;
}

.vthumb {
  flex: 1;
  background: #cdcdcd;
}

.arrow {
  display: block;
  width: 15px;
  height: 16px;
  flex: none;
  position: relative;
  background: #fff;
}

.arrow::after {
  content: "";
  position: absolute;
  left: 4px;
  top: 6px;
  width: 6px;
  height: 6px;
  border-left: 2px solid #555;
  border-top: 2px solid #555;
  transform: rotate(45deg);
}

.arrow.down::after {
  top: 2px;
  transform: rotate(225deg);
}

.arrow.left::after {
  left: 5px;
  top: 5px;
  transform: rotate(-45deg);
}

.arrow.right::after {
  left: 2px;
  top: 5px;
  transform: rotate(135deg);
}

.arrow.left,
.arrow.right {
  background: #f0f0f0;
  width: 18px;
}

.hscroll {
  height: 17px;
  flex: none;
  display: flex;
  background: #f0f0f0;
}

.hthumb {
  width: 102px;
  background: #cdcdcd;
}

.hscroll .arrow.right {
  margin-left: 19px;
}

/* component list */
.comp-panel {
  width: 138px;
  flex: none;
  margin-left: 7px;
  display: flex;
  flex-direction: column;
  font-family: var(--sim);
}

.comp-tools {
  height: 29px;
  flex: none;
  display: flex;
  align-items: center;
  gap: 3px;
  padding-left: 3px;
  white-space: nowrap;
  overflow: hidden;
  background: linear-gradient(#fbfbfb, #ececec);
  font-family: var(--ui);
}

.comp-tools .tool {
  gap: 5px;
}

.comp-tools .tool.copy {
  margin-left: 3px;
}

.comp-tools .caret {
  margin-left: 2px;
}

.comp-search {
  height: 24px;
  flex: none;
  margin-top: 3px;
  border: 1px solid #777;
  background: #fff;
  padding-left: 3px;
  line-height: 21px;
  color: #707070;
  font-size: 12px;
  font-family: var(--ui);
}

.comp-tree {
  flex: 1;
  min-height: 0;
  border-left: 1px solid #a9a9a9;
  border-bottom: 2px solid #a9a9a9;
  background: #fff;
  padding-top: 4px;
  overflow: hidden;
  font-size: 12px;
}

.comp-root,
.comp-row {
  position: relative;
  height: 16px;
  display: flex;
  align-items: center;
  white-space: nowrap;
}

.comp-root {
  padding-left: 23px;
  gap: 5px;
}

.comp-root .chev {
  left: 7px;
  top: 3px;
}

.comp-row {
  padding-left: 43px;
}

.comp-row::before {
  content: "";
  position: absolute;
  left: 30px;
  top: 0;
  bottom: 0;
  border-left: 1px dotted #888;
}

.comp-row.last::before {
  bottom: 8px;
}

.comp-row .hook {
  left: 30px;
  width: 13px;
}

.zdyx {
  margin-left: 5px;
  height: 16px;
  line-height: 16px;
}

.comp-row.last .zdyx {
  background: #316ac5;
  margin-left: 0;
  padding-left: 5px;
  padding-right: 5px;
}

.comp-row.last svg {
  background: #316ac5;
  height: 16px;
  box-shadow: -4px 0 0 #316ac5;
}

/* window behind the editor */
.back-area {
  flex: 1;
  min-width: 0;
  display: flex;
  flex-direction: column;
  background: #fff;
}

.back-strip {
  height: 28px;
  flex: none;
  background: linear-gradient(#fbfbfb, #ededed);
}

.back-body {
  flex: 1;
  min-height: 0;
  display: flex;
  padding: 20px 6px 3px 0;
}

.back-frame {
  flex: 1;
  min-width: 0;
  display: flex;
  flex-direction: column;
  border: 1px solid #555;
  border-left: 0;
  background: #dae5f2;
  padding: 0 7px 7px 0;
}

.back-caption {
  height: 30px;
  flex: none;
  margin-right: -7px;
  background: linear-gradient(#bfcfdd, #d8e4f2);
}

.back-inner {
  flex: 1;
  min-height: 0;
  display: flex;
  flex-direction: column;
  background: #f0f0f0;
  padding-top: 20px;
}

.back-outline {
  flex: 1;
  min-height: 0;
  margin-right: 3px;
  border: 1px solid #fff;
  border-left: 0;
  display: flex;
  flex-direction: column;
  padding-top: 4px;
  padding-bottom: 34px;
}

.back-tools {
  height: 27px;
  flex: none;
  display: flex;
  justify-content: flex-end;
  gap: 8px;
  padding-right: 179px;
  align-items: center;
  background: linear-gradient(90deg, #fbfbfb 0, #fbfbfb calc(100% - 174px), #f0f0f0 calc(100% - 174px));
}

.back-canvas {
  flex: 1;
  min-height: 0;
  margin-top: 30px;
  margin-right: 1px;
  background: #14171f;
  border-top: 2px solid #f00;
  border-right: 2px solid #f00;
  border-bottom: 2px solid #f00;
}

.back-svg {
  display: block;
  width: 1019px;
  height: 390px;
}

.t-note {
  fill: #dfe8f5;
  font-family: "Liberation Sans", sans-serif;
  font-size: 9px;
}

.t-gray,
.t-green {
  font-size: 16px;
  font-family: var(--sim);
  font-weight: 300;
}

.t-gray {
  fill: #c8c8c8;
}

.t-green {
  fill: #1bee1b;
}

.back-status {
  height: 21px;
  flex: none;
  margin-right: 2px;
  border-top: 1px solid #fff;
  background: linear-gradient(#f3f3f3, #f8f8f8);
  display: flex;
  justify-content: flex-end;
  align-items: flex-end;
}

.back-scroll {
  width: 16px;
  flex: none;
  display: flex;
  flex-direction: column;
  background: #f5f5f5;
  border-right: 1px solid #999;
  padding-bottom: 3px;
}

.back-thumb {
  flex: 1;
  background: #a6a6a6;
}

.back-scroll .arrow {
  width: 15px;
  background: #f5f5f5;
}

.back-scroll .arrow.up {
  height: 23px;
}

.back-scroll .arrow.up::after {
  top: 12px;
}

.back-scroll .arrow.down {
  height: 20px;
}

.back-scroll .arrow.down::after {
  top: 6px;
}

/* status bar */
.statusbar {
  height: 22px;
  flex: none;
  display: flex;
  gap: 3px;
  background: #f0f0f0;
  font-family: var(--sim);
  font-size: 12px;
  padding-top: 1px;
}

.cell {
  border: 1px solid #dedede;
  padding-left: 1px;
  line-height: 19px;
  white-space: nowrap;
}

.c1 {
  width: 147px;
}

.c2 {
  width: 77px;
}

.c3 {
  width: 97px;
}

.c4 {
  width: 47px;
}

.c5 {
  width: 913px;
}

.c6 {
  flex: 1;
}

/* task bar */
.taskbar {
  height: 40px;
  flex: none;
  display: flex;
  align-items: stretch;
  background: #0c131a;
  color: #fff;
  font-size: 12px;
}

.start {
  width: 48px;
  flex: none;
  display: flex;
  align-items: center;
  justify-content: center;
  background: #000;
}

.search {
  width: 344px;
  flex: none;
  display: flex;
  align-items: center;
  background: #333;
  padding-left: 10px;
}

.cortana {
  width: 21px;
  height: 21px;
  border: 3px solid #eee;
  border-radius: 50%;
}

.search-text {
  margin-left: 5px;
  font-size: 13.5px;
  color: #8f8f8f;
}

.search-mic {
  margin-left: auto;
  margin-right: 13px;
}

.task-slot {
  position: relative;
  flex: none;
  display: flex;
  align-items: center;
  justify-content: center;
}

.task-slot.running::after {
  content: "";
  position: absolute;
  left: 3px;
  right: 4px;
  bottom: 0;
  height: 3px;
  background: #6cb0ee;
}

.task-slot.current {
  background: #333b40;
}

.task-slot.current::after {
  left: 0;
  right: 0;
}

.task-link {
  margin-left: 14px;
  align-self: center;
  color: #ddd;
  font-size: 12px;
}

.cpu {
  width: 60px;
  margin-left: 13px;
  display: flex;
  flex-direction: column;
  align-items: center;
  justify-content: center;
  color: #ddd;
  font-size: 12px;
  line-height: 19px;
}

.tray {
  display: flex;
  align-items: center;
  margin-left: 13px;
  gap: 9px;
}

.wifi {
  margin-left: 2px;
}

.sound {
  margin-left: -6px;
}

.tray-ime {
  font-size: 14px;
  font-weight: 500;
  margin-left: 1px;
}

.tray-sogou {
  margin-left: 2px;
}

.clock {
  width: 74px;
  margin-left: 10px;
  display: flex;
  flex-direction: column;
  align-items: center;
  justify-content: center;
  color: #ddd;
  font-size: 13.5px;
  line-height: 19px;
}

.notify {
  position: relative;
  margin-left: 11px;
  align-self: center;
  display: flex;
}

.notify-num {
  position: absolute;
  left: 9px;
  top: 8px;
  width: 15px;
  height: 15px;
  border-radius: 50%;
  background: #333;
  color: #fff;
  font-size: 11px;
  font-weight: 700;
  text-align: center;
  line-height: 15px;
}

/* editor window */
.editor {
  position: absolute;
  left: 308px;
  top: 58px;
  width: 751px;
  height: 645px;
  display: flex;
  flex-direction: column;
  background: #f0f0f0;
  box-shadow: 2px 3px 10px rgba(0, 0, 0, 0.45);
}

.ed-title {
  height: 30px;
  flex: none;
  display: flex;
  align-items: flex-start;
  justify-content: space-between;
  background: #fff;
  padding: 8px 2px 0 12px;
}

.ed-title-text {
  color: #b4b4b4;
  font-size: 12px;
}

.ed-close {
  width: 19px;
  height: 19px;
  background: #e3e3e3;
  color: #fff;
  text-align: center;
  line-height: 17px;
  font-family: "Liberation Sans", sans-serif;
  font-size: 12px;
  font-weight: 700;
}

.ed-toolbar {
  flex: none;
  display: flex;
  align-items: center;
  white-space: nowrap;
  background: linear-gradient(#fafafa, #eaeaea);
}

.row1 {
  height: 27px;
  padding-left: 4px;
  border-top: 1px solid #eee;
}

.row2 {
  height: 30px;
  padding-left: 4px;
  border-top: 1px solid #e8e8e8;
  background: linear-gradient(#fbfbfb, #eeeeee);
}

.grip-v {
  width: 2px;
  height: 14px;
  margin-right: 6px;
  background-image: linear-gradient(#999 50%, transparent 50%);
  background-size: 2px 4px;
}

.row2 .grip-v {
  margin-right: 3px;
}

.ed-sep {
  width: 1px;
  height: 18px;
  background: #c4c4c4;
  margin: 0 6px 0 7px;
}

.ed-tool {
  display: inline-flex;
  align-items: center;
  gap: 3px;
  font-size: 12px;
}

.ed-tool + .ed-tool {
  margin-left: 8px;
}

.ed-tool.tightgap {
  gap: 0;
  margin-right: 3px;
}

.ed-tool.off {
  color: #8d8d8d;
}

.radio {
  display: inline-flex;
  align-items: center;
  gap: 9px;
  margin-right: 6px;
  font-size: 12px;
}

.radio.first {
  margin-right: 10px;
}

.radio i {
  width: 11px;
  height: 11px;
  border: 1px solid #888;
  border-radius: 50%;
  background: #fff;
}

.coord-label {
  font-size: 12px;
  margin-right: 9px;
  word-spacing: 1px;
}

.coord-label.y {
  margin-left: 13px;
  margin-right: 9px;
}

.row2 .ed-sep {
  margin: 0 3px 0 9px;
}

.spin {
  width: 78px;
  height: 22px;
  display: flex;
  border: 1px solid #7a7a7a;
  background: #f2f2f2;
}

.spin-val {
  flex: 1;
  text-align: right;
  padding-right: 5px;
  line-height: 20px;
  color: #666;
  font-family: "Liberation Sans", sans-serif;
  font-size: 13px;
}

.spin-btns {
  width: 20px;
  display: flex;
  flex-direction: column;
  align-items: center;
  justify-content: center;
  gap: 6px;
}

.tri-up,
.tri-down {
  width: 0;
  height: 0;
  border: 3px solid transparent;
}

.tri-up {
  border-bottom: 3px solid #888;
  border-top: 0;
}

.tri-down {
  border-top: 3px solid #888;
  border-bottom: 0;
}

.unit {
  margin-left: 5px;
  font-size: 12px;
  letter-spacing: 0.5px;
}

.cad-area {
  height: 468px;
  flex: none;
  background: #000;
}

.cad {
  display: block;
  width: 751px;
  height: 468px;
}

.c-green {
  fill: #00ff00;
  stroke: #00ff00;
  stroke-width: 0.35px;
  font-family: "Liberation Mono", monospace;
  font-size: 15px;
}

.c-gray {
  fill: #b4b4b4;
  font-family: "Liberation Mono", monospace;
  font-size: 11.5px;
}

.ed-dyn {
  height: 28px;
  flex: none;
  display: flex;
  align-items: center;
  padding-left: 2px;
  border-bottom: 1px solid #a9a9a9;
}

.dyn-btn {
  height: 23px;
  width: 58px;
  padding: 0;
  border: 1px solid #0078d7;
  background: #e5f1fb;
  font-size: 12px;
  font-family: var(--sim);
}

.ed-actions {
  height: 41px;
  flex: none;
  display: flex;
  align-items: center;
  justify-content: flex-end;
  padding-right: 13px;
  padding-top: 1px;
  font-family: var(--sim);
}

.win-btn {
  height: 23px;
  padding: 0;
  border: 1px solid #adadad;
  background: #e1e1e1;
  font-size: 12px;
  font-family: var(--sim);
}

.a1 {
  width: 113px;
  margin-right: 15px;
}

.a2 {
  width: 113px;
  margin-right: 25px;
}

.a3 {
  width: 72px;
  margin-right: 15px;
}

.a4 {
  width: 72px;
}

.ed-status {
  flex: 1;
  display: flex;
  gap: 2px;
  font-family: var(--sim);
  font-size: 12px;
  background: #f0f0f0;
  border-bottom: 2px solid #bbb;
}

.ed-cell {
  position: relative;
  border-top: 2px solid #e8e8e8;
  border-right: 1px solid #e4e4e4;
  background: linear-gradient(#f7f7f7, #f2f2f2);
  line-height: 19px;
  padding-left: 1px;
}

.e1 {
  width: 148px;
}

.e2 {
  width: 148px;
  padding-left: 2px;
}

.e3 {
  flex: 1;
}

.grip {
  position: absolute;
  right: 1px;
  bottom: 1px;
}

.back-status .grip {
  position: static;
}

/* define grid dialog */
.dialog {
  position: absolute;
  left: 223px;
  top: 221px;
  width: 411px;
  height: 223px;
  display: flex;
  flex-direction: column;
  border: 1px solid #4a8fd8;
  background: #efefef;
  font-family: var(--sim);
  box-shadow: 0 4px 14px rgba(0, 0, 0, 0.35);
}

.dlg-title {
  height: 25px;
  flex: none;
  display: flex;
  align-items: center;
  justify-content: space-between;
  padding: 0 10px 2px 3px;
  background: #fff;
  font-family: var(--ui);
  font-size: 12.5px;
}

.dlg-body {
  flex: 1;
  padding: 16px 13px 0 13px;
  display: flex;
  flex-direction: column;
  font-size: 12px;
}

.dlg-group {
  margin: 0 0 9px;
  padding: 0 9px 5px 7px;
  height: 64px;
  border: 1px solid #dcdcdc;
}

.dlg-group legend {
  padding: 0 2px 0 0;
  line-height: 13px;
  white-space: nowrap;
}

.dlg-input {
  height: 41px;
  margin-top: 3px;
  border: 1px solid #7f7f7f;
  background: #fff;
  padding: 0 2px;
  line-height: 15px;
}

.picked {
  background: #0078d7;
  color: #fff;
}

.text-caret {
  display: inline-block;
  width: 1px;
  height: 13px;
  vertical-align: middle;
  background: #f07a20;
}

.dlg-btns {
  display: flex;
  justify-content: flex-end;
  gap: 15px;
  padding-right: 1px;
  margin-top: 3px;
}

.dlg-btns .win-btn {
  width: 72px;
}

/* red marks */
.marks {
  position: absolute;
  inset: 0;
  width: 1366px;
  height: 768px;
  pointer-events: none;
}

.marks ellipse {
  fill: none;
  stroke: #ff0000;
  stroke-width: 9;
}

/* sogou bar */
.ime {
  position: absolute;
  left: 85px;
  top: 20px;
  width: 191px;
  height: 24px;
  display: flex;
  align-items: center;
  gap: 5px;
  padding-left: 17px;
  background: #fafcff;
  border: 1px solid #d4dde9;
}

.ime-logo {
  position: absolute;
  left: -14px;
  top: 0;
}

.ime-zh {
  color: #1a6cc8;
  font-size: 15px;
  margin-right: 3px;
  line-height: 1;
}

/* score badge */
.score-badge {
  position: absolute;
  left: 1153px;
  top: -30px;
  width: 49px;
  height: 49px;
  border-radius: 50%;
  display: flex;
  align-items: flex-end;
  justify-content: center;
  padding-bottom: 6px;
  background: #42c25c;
  border: 2px solid #d0d0d0;
  box-shadow: 0 1px 2px rgba(0, 0, 0, 0.4), inset 0 0 0 1px #2c9c44;
  color: #fff;
  font-family: "Liberation Sans", sans-serif;
  font-size: 11px;
  font-weight: 700;
  line-height: 1;
}
</style>
